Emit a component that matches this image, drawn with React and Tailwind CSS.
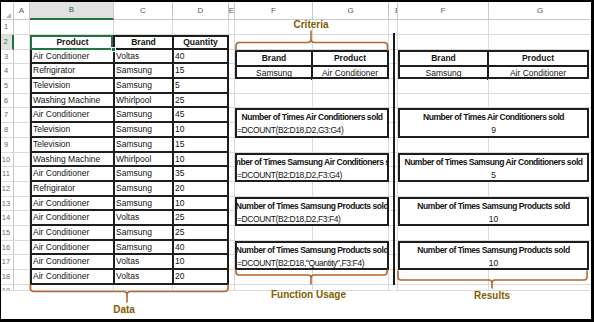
import React from 'react';

const H = {
  5: 'h-[5px]',
  6: 'h-[6px]',
  13: 'h-[13px]',
  14: 'h-[14px]',
  15: 'h-[15px]',
  29: 'h-[29px]',
  30: 'h-[30px]',
};

const ROWS = [
  [1, 15], [2, 15], [3, 14], [4, 15], [5, 15], [6, 14], [7, 15], [8, 15], [9, 15], [10, 14],
  [11, 15], [12, 15], [13, 14], [14, 15], [15, 15], [16, 14], [17, 15], [18, 15], [19, 6],
];

const DATA = [
  ['Air Conditioner', 'Voltas', '40'],
  ['Refrigirator', 'Samsung', '15'],
  ['Television', 'Samsung', '5'],
  ['Washing Machine', 'Whirlpool', '25'],
  ['Air Conditioner', 'Samsung', '45'],
  ['Television', 'Samsung', '10'],
  ['Television', 'Samsung', '15'],
  ['Washing Machine', 'Whirlpool', '10'],
  ['Air Conditioner', 'Samsung', '35'],
  ['Refrigirator', 'Samsung', '20'],
  ['Air Conditioner', 'Samsung', '10'],
  ['Air Conditioner', 'Voltas', '25'],
  ['Air Conditioner', 'Samsung', '25'],
  ['Air Conditioner', 'Samsung', '40'],
  ['Air Conditioner', 'Voltas', '10'],
  ['Air Conditioner', 'Voltas', '20'],
];

const BOXES = [
  { h: 30, title: 'Number of Times Air Conditioners sold', formula: '=DCOUNT(B2:D18,D2,G3:G4)', value: '9' },
  { h: 29, title: 'Number of Times Samsung Air Conditioners sold', formula: '=DCOUNT(B2:D18,D2,F3:G4)', value: '5' },
  { h: 29, title: 'Number of Times Samsung Products sold', formula: '=DCOUNT(B2:D18,D2,F3:F4)', value: '10' },
  { h: 29, title: 'Number of Times Samsung Products sold', formula: '=DCOUNT(B2:D18,"Quantity",F3:F4)', value: '10' },
];

const HEAD = 'h-[18px] shrink-0 border-b border-r border-[#c8c8c8] flex items-center justify-center overflow-hidden text-[8px] text-[#5a5a5a]';

function RowHeaders() {
  return (
    <div className="flex flex-col w-[13px] shrink-0">
      <div className="h-[18px] shrink-0 border-b border-r border-[#c8c8c8] relative">
        <svg className="absolute left-0 top-0" width="13" height="18" viewBox="0 0 13 18">
          <polygon points="10,11 10,16 5,16" fill="#b4b4b4" />
        </svg>
      </div>
      {ROWS.map(([n, h]) => (
        <div
          key={n}
          className={`${H[h]} shrink-0 overflow-hidden border-b border-b-[#dadada] text-[7.5px] text-center pr-[2px] ${
            n === 19 ? 'leading-[11px]' : 'leading-[14px]'
          } ${
            n === 2
              ? 'border-r-2 border-r-[#217346] bg-[#e1e1e1] text-[#217346]'
              : 'border-r border-r-[#c8c8c8] text-[#6a6a6a]'
          }`}
        >
          {n}
        </div>
      ))}
    </div>
  );
}

function GridCol({ w, letter, start }) {
  return (
    <div className={`flex flex-col shrink-0 ${w}`}>
      <div className={`${HEAD} ${start ? 'justify-start' : ''}`}>{letter}</div>
      {ROWS.map(([n, h]) => (
        <div key={n} className={`${H[h]} shrink-0 border-b border-r border-[#dadada]`} />
      ))}
    </div>
  );
}

function GapCol() {
  return (
    <div className="flex flex-col shrink-0 w-[4px]">
      <div className="h-[18px] shrink-0 border-b border-[#c8c8c8]" />
      {ROWS.map(([n, h]) => (
        <div key={n} className={`${H[h]} shrink-0 border-b border-[#dadada]`} />
      ))}
    </div>
  );
}

function BlackLineCol() {
  return (
    <div className="flex flex-col shrink-0 w-[2px]">
      <div className="h-[18px] shrink-0 border-b border-[#c8c8c8]" />
      <div className="h-[13px] shrink-0" />
      <div className="h-[252px] shrink-0 bg-[#1a1a1a]" />
      <div className="flex-1" />
    </div>
  );
}

function LeftTable() {
  const rowH = (rowNum) => ROWS[rowNum - 1][1];
  return (
    <div className="flex flex-col w-[199px] shrink-0">
      <div className="flex h-[18px] shrink-0">
        <div className="w-[84px] shrink-0 bg-[#e1e1e1] border-b-2 border-b-[#217346] border-r border-r-[#c8c8c8] flex items-center justify-center text-[8px] text-[#217346]">
          B
        </div>
        <div className={`w-[59px] ${HEAD}`}>C</div>
        <div className={`flex-1 ${HEAD}`}>D</div>
      </div>
      <div className="flex h-[15px] shrink-0">
        <div className="w-[84px] shrink-0 border-b border-r border-[#dadada]" />
        <div className="w-[59px] shrink-0 border-b border-r border-[#dadada]" />
        <div className="flex-1 border-b border-r border-[#dadada]" />
      </div>
      <div className="h-[250px] shrink-0 border-2 border-[#1e1e1e] flex flex-col text-[8.5px]">
        <div className="h-[13px] shrink-0 flex border-b-2 border-[#1e1e1e] font-bold">
          <div className="w-[83px] shrink-0 border-r-2 border-[#1e1e1e] flex items-center justify-center relative">
            Product
            <div className="absolute left-[-2px] top-[-2px] right-0 bottom-[-2px] border-2 border-[#217346] z-10" />
            <div className="absolute right-[-3px] bottom-[-4px] w-[5px] h-[5px] bg-[#217346] border border-white z-10" />
          </div>
          <div className="w-[59px] shrink-0 border-r-2 border-[#1e1e1e] flex items-center justify-center">Brand</div>
          <div className="flex-1 flex items-center justify-center">Quantity</div>
        </div>
        {DATA.map((r, i) => {
          const rowNum = i + 3;
          const last = rowNum === 18;
          return (
            <div
              key={i}
              className={`${last ? H[13] : H[rowH(rowNum)]} shrink-0 flex ${last ? '' : 'border-b-2 border-[#1e1e1e]'}`}
            >
              <div className="w-[83px] shrink-0 border-r-2 border-[#1e1e1e] flex items-center pl-[1px] whitespace-nowrap overflow-hidden">
                {r[0]}
              </div>
              <div className="w-[59px] shrink-0 border-r-2 border-[#1e1e1e] flex items-center pl-[1px]">{r[1]}</div>
              <div className="flex-1 flex items-center pl-[1px]">{r[2]}</div>
            </div>
          );
        })}
      </div>
      <div className="flex h-[6px] shrink-0">
        <div className="w-[84px] shrink-0 border-b border-r border-[#dadada]" />
        <div className="w-[59px] shrink-0 border-b border-r border-[#dadada]" />
        <div className="flex-1 border-b border-r border-[#dadada]" />
      </div>
    </div>
  );
}

function FGBlock({ right }) {
  const fw = right ? 'w-[91px]' : 'w-[78px]';
  const tw = right ? 'w-[191px]' : 'w-[154px]';
  const cw = right ? 'w-[89px]' : 'w-[76px]';
  const blank = (key, h) => (
    <div key={key} className={`flex shrink-0 ${H[h]}`}>
      <div className={`${fw} shrink-0 border-b border-r border-[#dadada]`} />
      <div className={`flex-1 border-b border-[#dadada] ${right ? '' : 'border-r'}`} />
    </div>
  );
  const box = (b, i) => (
    <div key={'b' + i} className={`${H[b.h]} ${tw} shrink-0 border-2 border-[#1e1e1e] flex flex-col overflow-hidden pt-[1px]`}>
      <div className="flex-1 flex items-center justify-center whitespace-nowrap font-bold text-[8.5px] tracking-[-0.45px]">
        <span>{b.title}</span>
      </div>
      {right ? (
        <div className="flex-1 flex items-center justify-center text-[8.5px]">{b.value}</div>
      ) : (
        <div className="flex-1 flex items-center pl-[0px] whitespace-nowrap text-[8.5px] tracking-[-0.4px]">{b.formula}</div>
      )}
    </div>
  );
  return (
    <div className={`flex flex-col shrink-0 ${right ? 'w-[193px]' : 'w-[154px]'}`}>
      <div className="flex h-[18px] shrink-0">
        <div className={`${fw} ${HEAD}`}>F</div>
        <div className={`flex-1 ${HEAD} ${right ? 'border-r-0' : ''}`}>G</div>
      </div>
      {blank('r1', 15)}
      {blank('r2', 15)}
      <div className={`h-[29px] ${tw} shrink-0 border-2 border-[#1e1e1e] flex flex-col text-[8.5px]`}>
        <div className="flex-1 flex border-b-2 border-[#1e1e1e] font-bold">
          <div className={`${cw} shrink-0 border-r-2 border-[#1e1e1e] flex items-center justify-center`}>Brand</div>
          <div className="flex-1 flex items-center justify-center">Product</div>
        </div>
        <div className="flex-1 flex">
          <div className={`${cw} shrink-0 border-r-2 border-[#1e1e1e] flex items-center justify-center`}>Samsung</div>
          <div className="flex-1 flex items-center justify-center whitespace-nowrap">Air Conditioner</div>
        </div>
      </div>
      {blank('r5', 15)}
      {blank('r6', 14)}
      {box(BOXES[0], 0)}
      {blank('r9', 15)}
      {box(BOXES[1], 1)}
      {blank('r12', 15)}
      {box(BOXES[2], 2)}
      {blank('r15', 15)}
      {box(BOXES[3], 3)}
      {blank('r18', 15)}
      {blank('r19', 6)}
    </div>
  );
}

const LABEL = 'font-bold text-[10px] leading-[12px] text-[#7f6000] text-center whitespace-nowrap';

export default function App() {
  return (
    <div className="w-[594px] h-[322px] relative overflow-hidden bg-white border-t-2 border-l border-r-[3px] border-b-[3px] border-black font-['Liberation_Sans',Arial,sans-serif] text-[#141414] flex flex-col">
      <div className="flex h-[289px] shrink-0">
        <RowHeaders />
        <GridCol w="w-[16px]" letter="A" />
        <LeftTable />
        <GridCol w="w-[6px]" letter="E" />
        <FGBlock />
        <GapCol />
        <BlackLineCol />
        <GridCol w="w-[3px]" letter="E" start />
        <FGBlock right />
      </div>
      <div className="flex flex-1">
        <div className="w-[228px] shrink-0">
          <div className={`ml-[29px] w-[188px] pt-[13px] ${LABEL}`}>Data</div>
        </div>
        <div className="w-[160px] shrink-0">
          <div className={`ml-[3px] w-[153px] -mt-[2px] ${LABEL}`}>Function Usage</div>
        </div>
        <div className="w-[4px] shrink-0" />
        <div className="w-[198px] shrink-0">
          <div className={`ml-[4px] w-[190px] -mt-[1px] ${LABEL}`}>Results</div>
        </div>
      </div>
      <svg
        className="absolute left-[-1px] top-[-2px] pointer-events-none z-20"
        width="594"
        height="322"
        viewBox="0 0 594 322"
        fill="none"
        stroke="#b6662e"
        strokeWidth="1.6"
        strokeLinecap="round"
      >
        <path d="M30.5 285 V288 Q30.5 291.5 34 291.5 H123.5 Q127 291.5 127 295 V302 M127 295 Q127 291.5 130.5 291.5 H224.5 Q228 291.5 228 288 V285" />
        <path d="M236 50 V46 Q236 42.5 239.5 42.5 H307.5 Q311 42.5 311 39 V31 M311 39 Q311 42.5 314.5 42.5 H384 Q387.5 42.5 387.5 46 V50" />
        <path d="M236 270 V272 Q236 275 239 275 H308 Q311 275 311 278 V284 M311 278 Q311 275 314 275 H384 Q387 275 387 272 V270" />
        <path d="M398 271 V277 Q398 280 401 280 H489 Q492 280 492 283 V288 M492 283 Q492 280 495 280 H584 Q587 280 587 277 V271" />
      </svg>
      <div className={`absolute left-[310px] top-[17px] -translate-x-1/2 z-20 ${LABEL}`}>Criteria</div>
    </div>
  );
}
